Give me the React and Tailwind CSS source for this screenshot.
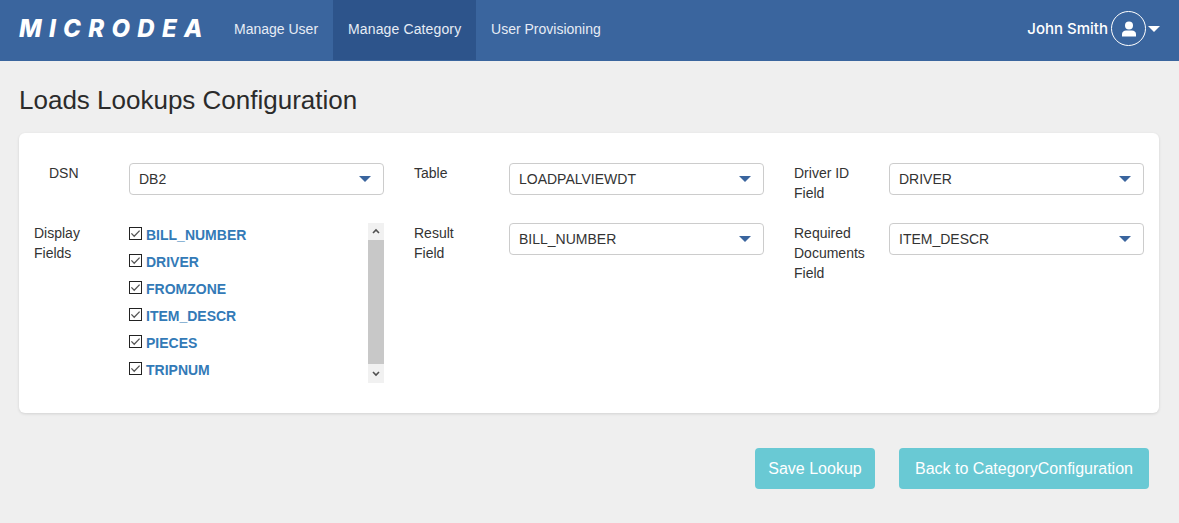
const DISPLAY_FIELDS = ['BILL_NUMBER', 'DRIVER', 'FROMZONE', 'ITEM_DESCR', 'PIECES', 'TRIPNUM'];

const Caret = ({ className }) => (
  <svg viewBox="0 0 12 6" className={className}>
    <path d="M0 0h12L6 6z" fill="currentColor" />
  </svg>
);

const Select = ({ value }) => (
  <div className="flex h-8 w-[255px] items-center justify-between rounded border border-[#ccc] bg-white pl-[9px] pr-3 text-[#333]">
    <span>{value}</span>
    <Caret className="h-[6px] w-3 text-[#3a659e]" />
  </div>
);

const CheckBox = () => (
  <svg viewBox="0 0 13 13" className="mb-[3px] h-[13px] w-[13px] shrink-0">
    <rect x="0.5" y="0.5" width="12" height="12" fill="#fff" stroke="#222" />
    <path d="M2.4 6.4l2.8 2.8 5.4-5.6" fill="none" stroke="#555" strokeWidth="1.3" />
  </svg>
);

const Field = ({ label, className = '', children }) => (
  <div className="flex">
    <div className={`w-[95px] shrink-0 pr-6 text-[#333] ${className}`}>{label}</div>
    {children}
  </div>
);

const Scrollbar = () => (
  <div className="flex h-40 w-4 flex-col items-center bg-[#f1f1f1]">
    <svg viewBox="0 0 16 17" className="h-[17px] w-4 shrink-0">
      <path d="M5 10l3-3 3 3" fill="none" stroke="#505050" strokeWidth="1.6" />
    </svg>
    <div className="w-full flex-1 bg-[#c8c8c8]" />
    <svg viewBox="0 0 16 19" className="h-[19px] w-4 shrink-0">
      <path d="M5 8l3 3 3-3" fill="none" stroke="#505050" strokeWidth="1.6" />
    </svg>
  </div>
);

export default function App() {
  return (
    <div className="min-h-[523px] bg-[#efefef] font-['Liberation_Sans',Arial,sans-serif] text-sm leading-5">
      <nav className="flex h-[61px] items-start bg-[#3a659e] text-white">
        <div className="ml-[19px] w-[200px] pt-[13px] font-['Inter',sans-serif] text-[24px] leading-[32px] font-extrabold tracking-[7.3px] italic">
          MICRODEA
        </div>
        <a className="flex h-[60px] items-center px-[15px] pb-[2px] text-[#e6ecf5]">Manage User</a>
        <a className="flex h-[60px] w-[143px] items-center whitespace-nowrap bg-[#2d548b] px-[15px] pb-[2px] tracking-[0.13px] text-[#e6ecf5]">Manage Category</a>
        <a className="flex h-[60px] items-center px-[15px] pb-[2px] text-[#e6ecf5]">User Provisioning</a>
        <div className="ml-auto flex h-[57px] items-center pr-[19px]">
          <span className="mr-[3px] font-['Inter',sans-serif] text-[15px] font-medium">John Smith</span>
          <span className="flex h-[35px] w-[35px] items-center justify-center rounded-full border border-white">
            <svg viewBox="0 0 16 16" className="h-4 w-4 text-white">
              <circle cx="8" cy="4.4" r="4" fill="currentColor" />
              <path d="M1 15.5v-2.6C1 10.6 3 9.4 5 9.4h6c2 0 4 1.2 4 3.5v2.6z" fill="currentColor" />
            </svg>
          </span>
          <Caret className="ml-[2px] h-[6px] w-3 text-white" />
        </div>
      </nav>

      <main className="pl-[19px] pr-5">
        <h1 className="pt-[25px] pb-[19px] text-[26px] leading-[28px] text-[#2b2b2b]">Loads Lookups Configuration</h1>

        <section className="rounded-md bg-white px-[15px] py-[30px] shadow-[0_1px_3px_rgba(0,0,0,0.12)]">
          <div className="grid grid-cols-[350px_350px_350px] gap-x-[30px] gap-y-5">
            <Field label="DSN" className="pl-[15px]"><Select value="DB2" /></Field>
            <Field label="Table"><Select value="LOADPALVIEWDT" /></Field>
            <Field label="Driver ID Field"><Select value="DRIVER" /></Field>

            <Field label="Display Fields">
              <div className="flex h-40 w-[255px] justify-between">
                <ul className="flex flex-col gap-[7px] pt-[2px]">
                  {DISPLAY_FIELDS.map((name) => (
                    <li key={name} className="flex items-center gap-1">
                      <CheckBox />
                      <span className="font-bold text-[#337ab7]">{name}</span>
                    </li>
                  ))}
                </ul>
                <Scrollbar />
              </div>
            </Field>
            <Field label="Result Field"><Select value="BILL_NUMBER" /></Field>
            <Field label="Required Documents Field"><Select value="ITEM_DESCR" /></Field>
          </div>
        </section>

        <div className="flex justify-end gap-6 pt-[35px] pr-[10px] text-base text-white">
          <button className="h-[41px] w-[120px] rounded bg-[#69c9d4]">Save Lookup</button>
          <button className="h-[41px] w-[250px] rounded bg-[#69c9d4]">Back to CategoryConfiguration</button>
        </div>
      </main>
    </div>
  );
}
